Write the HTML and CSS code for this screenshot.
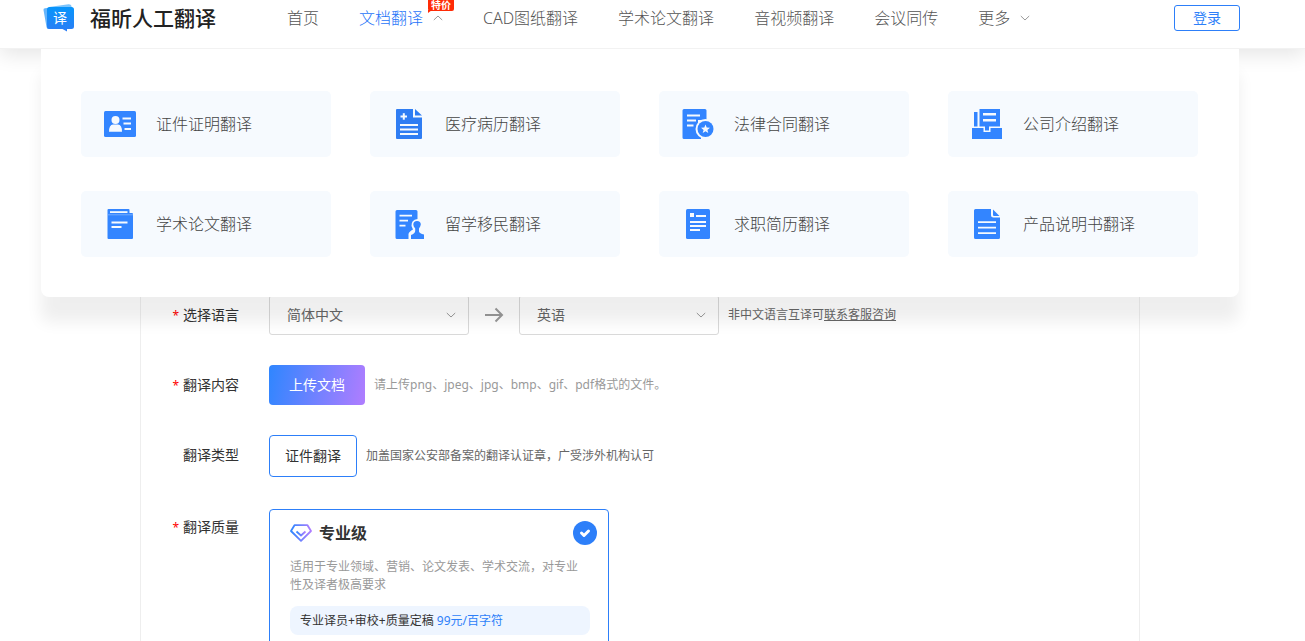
FILE: index.html
```html
<!DOCTYPE html>
<html lang="zh-CN">
<head>
<meta charset="utf-8">
<title>福昕人工翻译</title>
<link rel="stylesheet" href="styles.css">
</head>
<body>
<div class="shell">
  <header class="header">
    <div class="header-inner">
      <a class="brand" href="#">
        <svg class="brand-mark" width="32" height="28" viewBox="0 0 32 28" aria-hidden="true">
          <defs><linearGradient id="mark" x1="0" y1="0" x2="0" y2="1"><stop offset="0" stop-color="#0795fb"/><stop offset="1" stop-color="#2c7df5"/></linearGradient></defs>
          <path d="M6 3 25.500 .2Q28 0 28.500 2V12H6Z" fill="#7cc4fc"/>
          <path d="M.5 6Q.2 4.500 2 4.200L8 3.500V25H5.500Q3.800 25 3.500 23Z" fill="#66b5fb"/>
          <path d="M6.500 3H28.500Q31 3 31 5.500V22.500Q31 25 28.500 25H24V27.500L19.500 25H6.500Q4 25 4 22.500V5.500Q4 3 6.500 3Z" fill="url(#mark)"/>
          <text class="brand-glyph" x="17" y="19" text-anchor="middle">译</text>
        </svg>
        <span class="brand-name">福昕人工翻译</span>
      </a>
      <nav class="nav">
        <a href="#">首页</a>
        <a class="active" href="#">文档翻译
          <svg class="caret" width="10" height="6" viewBox="0 0 10 6"><path d="M.8 5 5 1 9.200 5"/></svg>
          <span class="badge">特价</span>
        </a>
        <a href="#">CAD图纸翻译</a>
        <a href="#">学术论文翻译</a>
        <a href="#">音视频翻译</a>
        <a href="#">会议同传</a>
        <a href="#">更多
          <svg class="caret" width="10" height="6" viewBox="0 0 10 6"><path d="M.8 1 5 5 9.200 1"/></svg>
        </a>
      </nav>
      <button class="login" type="button">登录</button>
    </div>
  </header>

  <div class="mega">
    <a class="tile" href="#">
      <svg class="tile-icon" viewBox="0 0 32 32"><rect y="3" width="32" height="26" rx="1.500" fill="#3385ff"/><g fill="#f6fafe"><circle cx="11.500" cy="12" r="4"/><path d="M5 23.800Q5 16.800 9 16.500H14Q18 16.800 18 23.800Z"/><rect x="18.500" y="9.500" width="8.500" height="2"/><rect x="19.500" y="14.500" width="7.500" height="2"/><rect x="20.500" y="20" width="6.500" height="2"/></g></svg>
      <span>证件证明翻译</span>
    </a>
    <a class="tile" href="#">
      <svg class="tile-icon" viewBox="0 0 32 32"><path d="M4 1H20V9.500H29V30Q29 31 28 31H4Q3 31 3 30V2Q3 1 4 1Z" fill="#2f7df3"/><path d="M22 1 29 7.500H22Z" fill="#2f7df3"/><g fill="#f6fafe"><rect x="7.500" y="7.500" width="6.500" height="2"/><rect x="9.800" y="5.200" width="2" height="6.500"/><rect x="7" y="16" width="18" height="2"/><rect x="7" y="20.500" width="18" height="2"/><rect x="7" y="25" width="18" height="2"/></g></svg>
      <span>医疗病历翻译</span>
    </a>
    <a class="tile" href="#">
      <svg class="tile-icon" viewBox="0 0 32 32"><path d="M2 1H23Q24.500 1 24.500 2.500V12H16V31H2Q.5 31 .5 29.500V2.500Q.5 1 2 1Z" fill="#3385ff"/><path d="M15 20H19V31H15Z" fill="#3385ff"/><circle cx="23.500" cy="21" r="10" fill="#f6fafe"/><circle cx="23.500" cy="21" r="8" fill="#3385ff"/><path d="M23.500 16.500 24.700 19.600 28 19.800 25.400 21.900 26.300 25 23.500 23.200 20.700 25 21.600 21.900 19 19.800 22.300 19.600Z" fill="#f6fafe"/><g fill="#f6fafe"><rect x="5" y="6.500" width="13" height="2"/><rect x="5" y="11.500" width="9" height="2"/><rect x="5" y="16.500" width="6.500" height="2"/></g></svg>
      <span>法律合同翻译</span>
    </a>
    <a class="tile" href="#">
      <svg class="tile-icon" viewBox="0 0 32 32"><g fill="#3385ff"><rect x="3" y="4" width="3.500" height="14.500"/><path d="M8.500 1H29V18.500H18V22.500H14V18.500H8.500Z"/><path d="M1 20H12.500V24H19.500V20H31V31H1Z"/></g><path d="M12 5H25V7.500H12ZM12 11H25V13.500H12Z" fill="#f6fafe"/></svg>
      <span>公司介绍翻译</span>
    </a>
    <a class="tile" href="#">
      <svg class="tile-icon" viewBox="0 0 32 32"><path d="M4.500 1H24.500Q25.500 1 25.500 2V5H28Q29 5 29 6V30Q29 31 28 31H4.500Q3.500 31 3.500 30V2Q3.500 1 4.500 1Z" fill="#3385ff"/><path d="M6 3.200H23.500V5H6Z" fill="#f6fafe"/><path d="M3.500 6.500H29V7.200H3.500Z" fill="#8dbbff"/><path d="M7.500 13.500H23.500V15.500H7.500ZM7.500 18H17.500V20H7.500Z" fill="#f6fafe"/></svg>
      <span>学术论文翻译</span>
    </a>
    <a class="tile" href="#">
      <svg class="tile-icon" viewBox="0 0 32 32"><path d="M4 2H23Q24.500 2 24.500 3.500V11Q18 12 18.500 18L20 21.500Q16 23.500 15.500 26V31H4Q2.500 31 2.500 29.500V3.500Q2.500 2 4 2Z" fill="#3385ff"/><path d="M24 13Q27.800 13 27.800 16.600 27.500 18.500 26 20.500V23.500Q26.500 25.500 31 26.500V31H18V27Q22 25.500 22.200 23V20.500Q20.300 18.500 20.300 16.600 20.300 13 24 13Z" fill="#3385ff"/><path d="M6.500 6.700H19V8.500H6.500ZM6.500 11.700H15V13.500H6.500ZM6.500 16.700H12.500V18.500H6.500Z" fill="#f6fafe"/></svg>
      <span>留学移民翻译</span>
    </a>
    <a class="tile" href="#">
      <svg class="tile-icon" viewBox="0 0 32 32"><rect x="4" y="1" width="24" height="30" rx="1.500" fill="#3385ff"/><path d="M8 5H12V9H8ZM14 7H24V9H14ZM8 13H24V15H8ZM8 17H24V19H8ZM8 21H18V23H8Z" fill="#f6fafe"/></svg>
      <span>求职简历翻译</span>
    </a>
    <a class="tile" href="#">
      <svg class="tile-icon" viewBox="0 0 32 32"><path d="M4.500 1H20V7Q20 9.500 22.500 9.500H29V29.500Q29 31 27.500 31H4.500Q3 31 3 29.500V2.500Q3 1 4.500 1Z" fill="#3385ff"/><path d="M22 1.500 28.500 8H23Q22 8 22 7Z" fill="#3385ff"/><path d="M7 13.200H25V15H7ZM7 18.700H25V20.500H7ZM7 24.200H25V26H7Z" fill="#f6fafe"/></svg>
      <span>产品说明书翻译</span>
    </a>
  </div>

  <main class="page">
    <form class="order">
      <div class="row">
        <label class="row-label required" for="from">选择语言</label>
        <div class="row-body">
          <span class="select">
            <select id="from"><option>简体中文</option></select>
            <svg class="select-caret" width="10" height="6" viewBox="0 0 10 6"><path d="M.8 1 5 5 9.200 1"/></svg>
          </span>
          <svg class="arrow" width="20" height="16" viewBox="0 0 20 16"><path d="M1 8H18M11.500 1.500 18 8 11.500 14.500"/></svg>
          <span class="select">
            <select id="to" aria-label="目标语言"><option>英语</option></select>
            <svg class="select-caret" width="10" height="6" viewBox="0 0 10 6"><path d="M.8 1 5 5 9.200 1"/></svg>
          </span>
          <span class="note">非中文语言互译可<a href="#">联系客服咨询</a></span>
        </div>
      </div>
      <div class="row">
        <span class="row-label required">翻译内容</span>
        <div class="row-body">
          <button class="upload" type="button">上传文档</button>
          <span class="note muted">请上传png、jpeg、jpg、bmp、gif、pdf格式的文件。</span>
        </div>
      </div>
      <div class="row">
        <span class="row-label">翻译类型</span>
        <div class="row-body">
          <button class="kind" type="button">证件翻译</button>
          <span class="note">加盖国家公安部备案的翻译认证章，广受涉外机构认可</span>
        </div>
      </div>
      <div class="row">
        <span class="row-label required">翻译质量</span>
        <div class="row-body">
          <label class="card">
            <span class="card-head">
              <svg width="22" height="18" viewBox="0 0 22 18"><defs><linearGradient id="gem"><stop offset="0" stop-color="#2f86ff"/><stop offset="1" stop-color="#b07dff"/></linearGradient></defs><g fill="none" stroke="url(#gem)" stroke-width="1.800" stroke-linejoin="round"><path d="M4.500 1.200H17.500L21 7 11 16.800 1 7Z"/><path d="M6.500 7.500 11 11.500 15.500 7.500"/></g></svg>
              <span class="card-title">专业级</span>
              <span class="check">
                <input type="radio" name="quality" checked>
                <svg class="check-tick" width="24" height="24" viewBox="0 0 24 24"><path d="M8.500 12 11 14.500 15.500 10"/></svg>
              </span>
            </span>
            <span class="card-desc">适用于专业领域、营销、论文发表、学术交流，对专业性及译者极高要求</span>
            <span class="card-price">专业译员+审校+质量定稿 <b>99元/百字符</b></span>
          </label>
        </div>
      </div>
    </form>
  </main>
</div>
</body>
</html>
```
FILE: styles.css
```css
* { box-sizing: border-box; }

body {
  margin: 0;
  background: #fff;
  color: #333;
  font: 14px/20px "Noto Sans", "Noto Sans CJK SC", sans-serif;
}

a { color: inherit; text-decoration: none; }
button, select { font: inherit; cursor: pointer; }
svg { flex: none; }

.shell {
  position: relative;
  height: 100vh;
  overflow: hidden;
}

/* Header */
.header {
  position: relative;
  z-index: 1;
  padding-right: 25px;
  border-bottom: 1px solid #f2f2f2;
  background: #fff;
  box-shadow: 0 6px 20px rgba(0, 0, 0, .1);
}

.header-inner {
  display: flex;
  align-items: center;
  max-width: 1200px;
  height: 48px;
  margin: 0 auto;
  padding: 0 0 12px 3px;
}

.brand {
  display: flex;
  align-items: center;
  gap: 15px;
  width: 244px;
}

.brand-glyph { fill: #fff; font-size: 14px; }

.brand-name {
  color: #222;
  font-size: 21px;
  font-weight: 500;
  line-height: 28px;
}

.nav {
  display: flex;
  gap: 40px;
  color: #555;
  font-size: 16px;
  font-weight: 300;
  line-height: 24px;
  white-space: nowrap;
}

.nav a {
  position: relative;
  display: flex;
  align-items: center;
  gap: 10px;
}

.nav .active { color: #1f74f8; }

.caret, .select-caret {
  fill: none;
  stroke: #999;
  stroke-width: 1;
}

.badge {
  position: absolute;
  left: 69px;
  top: -6px;
  padding: 0 3px;
  border-radius: 0 0 2px 2px;
  background: #ff2b06;
  color: #fff;
  font-size: 10px;
  font-weight: 700;
  line-height: 11px;
}

.badge::after {
  content: "";
  position: absolute;
  left: 0;
  top: 10px;
  border-top: 3px solid #ff2b06;
  border-right: 4px solid transparent;
}

.login {
  width: 66px;
  height: 26px;
  margin-left: auto;
  padding: 0;
  border: 1px solid #2d7ff9;
  border-radius: 3px;
  background: #fff;
  color: #2d7ff9;
  line-height: 24px;
}

/* Drop-down panel */
.mega {
  position: absolute;
  z-index: 2;
  top: 49px;
  left: 41px;
  right: 66px;
  display: grid;
  grid-template-columns: repeat(4, 1fr);
  gap: 34px 39px;
  padding: 42px 41px 40px 40px;
  border-radius: 0 0 8px 8px;
  background: #fff;
  box-shadow: 0 25px 16px rgba(0, 0, 0, .067);
}

.tile {
  display: flex;
  align-items: center;
  gap: 20px;
  height: 66px;
  padding-left: 23px;
  border-radius: 5px;
  background: #f6fafe;
  color: #444;
  font-size: 16px;
  font-weight: 300;
}

.tile-icon { width: 32px; height: 32px; }

/* Order form */
.page { padding-right: 25px; }

.order {
  display: flex;
  flex-direction: column;
  gap: 30px;
  max-width: 1000px;
  margin: 0 auto;
  padding: 246px 0 40px;
  border: solid #eee;
  border-width: 0 1px;
}

.row { display: flex; gap: 30px; }

.row-label {
  width: 98px;
  color: #333;
  line-height: 40px;
  text-align: right;
}

.required::before {
  content: "*";
  margin-right: 4px;
  color: #f00;
  font-size: 12px;
  line-height: 20px;
}

.row-body { display: flex; align-items: center; }

.select { position: relative; }

.select select {
  display: block;
  width: 200px;
  height: 40px;
  padding: 0 17px;
  border: 1px solid #d9d9d9;
  border-radius: 3px;
  background: transparent;
  color: #666;
  appearance: none;
}

.select-caret {
  position: absolute;
  right: 13px;
  top: 17px;
  pointer-events: none;
}

.arrow {
  margin: 0 15px;
  fill: none;
  stroke: #999;
  stroke-width: 2;
}

.note {
  margin-left: 9px;
  color: #666;
  font-size: 12px;
}

.note a { text-decoration: underline; }
.muted { color: #999; }

.upload {
  width: 96px;
  height: 40px;
  border: 0;
  border-radius: 4px;
  background: linear-gradient(100deg, #2f86ff, #b07dff);
  color: #fff;
}

.kind {
  width: 88px;
  height: 42px;
  padding: 0;
  border: 1px solid #2d7ff9;
  border-radius: 4px;
  background: #fff;
  color: #333;
}

.card {
  display: flex;
  flex-direction: column;
  width: 340px;
  min-height: 180px;
  margin-top: 2px;
  padding: 11px 11px 20px 20px;
  border: 1px solid #2d7ff9;
  border-radius: 4px;
  cursor: pointer;
}

.card-head { display: flex; align-items: center; gap: 7px; }

.card-title { font-size: 16px; font-weight: 700; }

.check {
  position: relative;
  height: 24px;
  margin-left: auto;
}

.check input {
  display: block;
  width: 24px;
  height: 24px;
  margin: 0;
  border-radius: 50%;
  background: #2d7ff9;
  appearance: none;
}

.check-tick {
  position: absolute;
  left: 0;
  top: 0;
  fill: none;
  stroke: #fff;
  stroke-width: 3;
  stroke-linecap: round;
  stroke-linejoin: round;
}

.card-desc {
  margin-top: 13px;
  padding-right: 16px;
  color: #999;
  font-size: 12px;
  line-height: 18px;
}

.card-price {
  margin: 12px 7px 0 0;
  padding: 0 10px;
  border-radius: 8px;
  background: #eef5ff;
  font-size: 12px;
  line-height: 29px;
}

.card-price b { color: #2d7ff9; font-weight: 400; }
```
